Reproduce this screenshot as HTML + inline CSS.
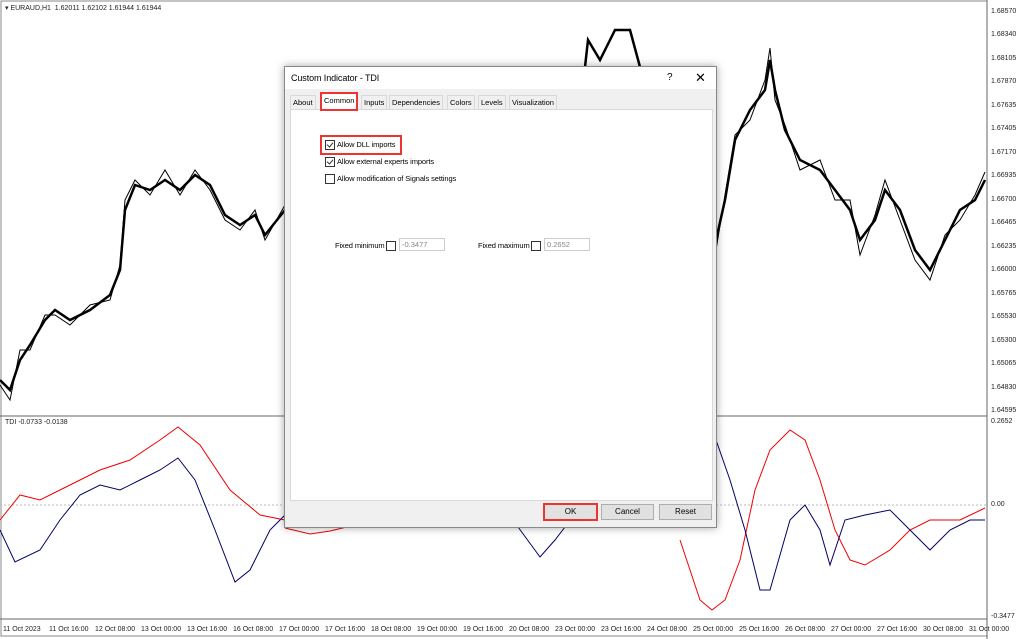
<!DOCTYPE html><html><head><style>
body{margin:0;width:1024px;height:639px;overflow:hidden;background:#fff;font-family:"Liberation Sans",sans-serif;position:relative}
.a{position:absolute;font-size:7px;color:#222;white-space:nowrap}
.dlg{position:absolute;left:284px;top:66px;width:431px;height:460px;background:#f0f0f0;border:1px solid #888;box-shadow:0 0 8px rgba(0,0,0,.35)}
.t{position:absolute;font-size:7.5px;color:#000;white-space:nowrap;letter-spacing:-0.1px}
.cb{position:absolute;width:8px;height:8px;border:1px solid #333;background:#fff}
.cb.c::after{content:"";position:absolute;left:2px;top:0px;width:3px;height:5px;border:solid #333;border-width:0 1px 1px 0;transform:rotate(40deg)}
.btn{position:absolute;top:437px;width:51px;height:14px;background:#e1e1e1;border:1px solid #adadad;font-size:8px;text-align:center;line-height:14px}
.tab{position:absolute;top:28px;height:13px;font-size:7.5px;line-height:13px;padding:0 2px;border:1px solid #d9d9d9;border-bottom:none;background:#f0f0f0}
.inp{position:absolute;width:42px;height:11px;border:1px solid #ccc;background:#fff;font-size:7.5px;color:#888;line-height:11px;padding-left:2px}
</style></head><body>
<svg width="1024" height="639" style="position:absolute;left:0;top:0">
<rect x="1" y="1" width="986" height="635" fill="none" stroke="#888"/>
<line x1="0" y1="416" x2="987" y2="416" stroke="#666"/>
<line x1="0" y1="619" x2="987" y2="619" stroke="#666"/>
<line x1="987" y1="0" x2="987" y2="639" stroke="#666"/>
<line x1="0" y1="505" x2="987" y2="505" stroke="#bbb" stroke-dasharray="2,2"/>
<g fill="none" stroke="#000" stroke-width="2.5">
<polyline points="0,380 10,390 20,360 30,345 45,320 55,310 70,320 90,310 110,295 120,270 125,210 135,185 150,190 165,180 180,190 195,175 210,185 225,215 240,225 255,215 265,235 285,210"/>
<polyline points="585,67 588,40 600,60 615,30 630,30 640,67"/>
<polyline points="716,240 725,200 735,140 750,110 765,90 770,60 775,90 785,130 800,160 820,170 835,190 850,210 860,240 875,220 885,190 900,210 915,250 930,270 945,240 960,210 975,200 985,180"/>
</g>
<g fill="none" stroke="#000" stroke-width="1">
<polyline points="0,385 10,400 20,350 30,350 45,315 55,315 70,325 90,305 110,300 120,265 125,200 135,180 150,195 165,170 180,195 195,170 210,190 225,220 240,230 255,210 265,240 285,205"/>
<polyline points="716,250 725,195 735,135 750,120 765,80 770,48 775,100 785,125 800,170 820,160 835,200 850,200 860,255 875,215 885,180 900,220 915,260 930,280 945,235 960,220 975,195 985,172"/>
</g>
<polyline fill="none" stroke="#e00" stroke-width="1" points="0,520 20,495 40,500 70,485 100,470 130,460 160,440 178,427 200,445 230,490 260,515 285,520"/>
<polyline fill="none" stroke="#e00" stroke-width="1" points="285,528 310,534 330,531 355,525 360,527"/>
<polyline fill="none" stroke="#e00" stroke-width="1" points="680,540 700,600 712,610 725,600 740,560 755,490 770,450 790,430 805,440 820,480 835,530 850,560 865,565 890,550 910,530 930,520 960,520 985,508"/>
<polyline fill="none" stroke="#006" stroke-width="1" points="0,530 15,562 40,550 60,520 80,495 100,485 120,490 140,480 160,470 178,458 195,480 215,530 235,582 250,570 270,530 285,515"/>
<polyline fill="none" stroke="#006" stroke-width="1" points="518,527 540,557 555,540 565,527"/>
<polyline fill="none" stroke="#006" stroke-width="1" points="716,440 730,480 745,530 760,590 770,590 790,520 805,505 820,530 830,565 845,520 865,515 890,510 910,530 930,550 950,530 970,520 985,520"/>
</svg>
<div class="a" style="left:5px;top:4px">▾ EURAUD,H1 &nbsp;1.62011 1.62102 1.61944 1.61944</div>
<div class="a" style="left:5px;top:419px">TDI -0.0733 -0.0138</div>
<div class="a" style="left:991px;top:8px">1.68570</div><div class="a" style="left:991px;top:31px">1.68340</div><div class="a" style="left:991px;top:55px">1.68105</div><div class="a" style="left:991px;top:78px">1.67870</div><div class="a" style="left:991px;top:102px">1.67635</div><div class="a" style="left:991px;top:125px">1.67405</div><div class="a" style="left:991px;top:149px">1.67170</div><div class="a" style="left:991px;top:172px">1.66935</div><div class="a" style="left:991px;top:196px">1.66700</div><div class="a" style="left:991px;top:219px">1.66465</div><div class="a" style="left:991px;top:243px">1.66235</div><div class="a" style="left:991px;top:266px">1.66000</div><div class="a" style="left:991px;top:290px">1.65765</div><div class="a" style="left:991px;top:313px">1.65530</div><div class="a" style="left:991px;top:337px">1.65300</div><div class="a" style="left:991px;top:360px">1.65065</div><div class="a" style="left:991px;top:384px">1.64830</div><div class="a" style="left:991px;top:407px">1.64595</div>
<div class="a" style="left:991px;top:418px">0.2652</div><div class="a" style="left:991px;top:501px">0.00</div><div class="a" style="left:991px;top:613px">-0.3477</div>
<div class="a" style="left:3px;top:626px">11 Oct 2023</div>
<div class="a" style="left:49px;top:626px">11 Oct 16:00</div><div class="a" style="left:95px;top:626px">12 Oct 08:00</div><div class="a" style="left:141px;top:626px">13 Oct 00:00</div><div class="a" style="left:187px;top:626px">13 Oct 16:00</div><div class="a" style="left:233px;top:626px">16 Oct 08:00</div><div class="a" style="left:279px;top:626px">17 Oct 00:00</div><div class="a" style="left:325px;top:626px">17 Oct 16:00</div><div class="a" style="left:371px;top:626px">18 Oct 08:00</div><div class="a" style="left:417px;top:626px">19 Oct 00:00</div><div class="a" style="left:463px;top:626px">19 Oct 16:00</div><div class="a" style="left:509px;top:626px">20 Oct 08:00</div><div class="a" style="left:555px;top:626px">23 Oct 00:00</div><div class="a" style="left:601px;top:626px">23 Oct 16:00</div><div class="a" style="left:647px;top:626px">24 Oct 08:00</div><div class="a" style="left:693px;top:626px">25 Oct 00:00</div><div class="a" style="left:739px;top:626px">25 Oct 16:00</div><div class="a" style="left:785px;top:626px">26 Oct 08:00</div><div class="a" style="left:831px;top:626px">27 Oct 00:00</div><div class="a" style="left:877px;top:626px">27 Oct 16:00</div><div class="a" style="left:923px;top:626px">30 Oct 08:00</div><div class="a" style="left:969px;top:626px">31 Oct 00:00</div>

<div class="dlg">
<div style="position:absolute;left:0;top:0;width:431px;height:22px;background:#fff"></div>
<div class="t" style="left:6px;top:6px;font-size:9px">Custom Indicator - TDI</div>
<div class="t" style="left:382px;top:5px;font-size:10px">?</div>
<div class="t" style="left:410px;top:3px;font-size:13px">✕</div>
<div style="position:absolute;left:5px;top:42px;width:421px;height:390px;background:#fff;border:1px solid #d9d9d9"></div>
<div class="tab" style="left:5px">About</div>
<div class="tab" style="left:36px;top:26px;height:15px;background:#fff;border:1px solid #e33;outline:1px solid #e33">Common</div>
<div class="tab" style="left:76px">Inputs</div>
<div class="tab" style="left:104px">Dependencies</div>
<div class="tab" style="left:162px">Colors</div>
<div class="tab" style="left:193px">Levels</div>
<div class="tab" style="left:224px">Visualization</div>
<div style="position:absolute;left:36px;top:69px;width:78px;height:16px;border:1px solid #e33;outline:1px solid #e33"></div>
<div class="cb c" style="left:40px;top:73px"></div><div class="t" style="left:52px;top:73px">Allow DLL imports</div>
<div class="cb c" style="left:40px;top:90px"></div><div class="t" style="left:52px;top:90px">Allow external experts imports</div>
<div class="cb" style="left:40px;top:107px"></div><div class="t" style="left:52px;top:107px">Allow modification of Signals settings</div>
<div class="t" style="left:50px;top:174px">Fixed minimum</div><div class="cb" style="left:101px;top:174px"></div><div class="inp" style="left:114px;top:171px">-0.3477</div>
<div class="t" style="left:193px;top:174px">Fixed maximum</div><div class="cb" style="left:246px;top:174px"></div><div class="inp" style="left:259px;top:171px">0.2652</div>
<div class="btn" style="left:258px;border:2px solid #e33;top:436px">OK</div>
<div class="btn" style="left:316px">Cancel</div>
<div class="btn" style="left:374px">Reset</div>
</div>
</body></html>
